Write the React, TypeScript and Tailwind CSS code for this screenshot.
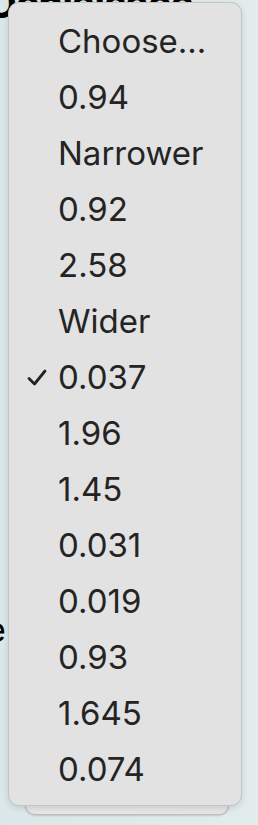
import React from "react";

const items = ["Choose...", "0.94", "Narrower", "0.92", "2.58", "Wider", "0.037", "1.96", "1.45", "0.031", "0.019", "0.93", "1.645", "0.074"];

export default function App() {
  return (
    <div className="relative w-[258px] h-[825px] overflow-hidden bg-gradient-to-r from-[#dbe7e8] to-[#e3ecec]" style={{ fontFamily: "Inter, 'Noto Sans', sans-serif" }}>
      <div className="absolute left-[-14px] top-[-26px] text-[40px] font-bold text-black tracking-tight whitespace-nowrap">Ochialsace</div>
      <div className="absolute left-[-14px] top-[604px] text-[34px] text-black">e</div>
      <div className="absolute left-[25px] top-[700px] w-[204px] h-[115px] rounded-b-[10px] bg-[#e6e6e6] border border-[#b9bcbf] shadow-[0_1px_2px_rgba(0,0,0,0.15)]" />
      <div className="absolute left-[8px] top-[2px] w-[234px] h-[804px] rounded-[11px] bg-[#e2e2e2] border border-[#c2c4c5] shadow-[0_2px_6px_rgba(0,0,0,0.12)] pt-[10px] text-[#242424]">
        {items.map((t) => (
          <div key={t} className="relative h-[56px] flex items-center pl-[49px] text-[33px] leading-none">
            {t === "0.037" && (
              <svg className="absolute left-[18px] top-[20px]" width="20" height="18" viewBox="0 0 20 18">
                <path d="M2 9.5 L7.5 15 L18 2" fill="none" stroke="#242424" strokeWidth="2.8" strokeLinecap="round" strokeLinejoin="round" />
              </svg>
            )}
            <span>{t}</span>
          </div>
        ))}
      </div>
    </div>
  );
}
